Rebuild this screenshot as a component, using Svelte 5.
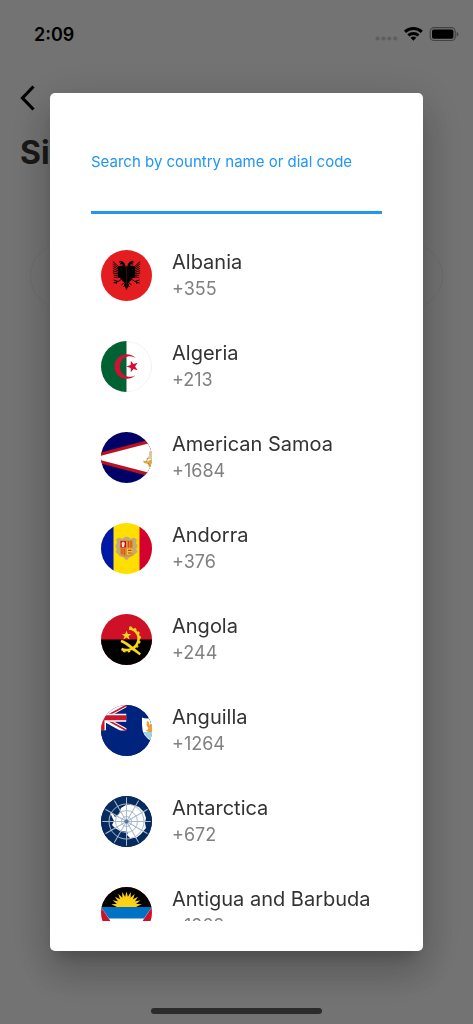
<script>
  let query = $state('');

  const countries = [
    { name: 'Albania', dial: '+355', flag: albania },
    { name: 'Algeria', dial: '+213', flag: algeria },
    { name: 'American Samoa', dial: '+1684', flag: samoa },
    { name: 'Andorra', dial: '+376', flag: andorra },
    { name: 'Angola', dial: '+244', flag: angola },
    { name: 'Anguilla', dial: '+1264', flag: anguilla },
    { name: 'Antarctica', dial: '+672', flag: antarctica },
    { name: 'Antigua and Barbuda', dial: '+1268', flag: antigua }
  ];

  const shown = $derived(
    countries.filter((c) => (c.name + c.dial).toLowerCase().includes(query.toLowerCase()))
  );

  const meridians = [0, 30, 60, 90, 120, 150];
  const rays = [-80, -64, -48, -32, -16, 0, 16, 32, 48, 64, 80];
  const feathers = [0, 1, 2, 3, 4, 5, 6, 7];
</script>

{#snippet albania()}
  <rect width="51" height="51" fill="#e41e20" />
  {#snippet wing()}
    <path d="M25.500 16 L24 18 L22 15.500 L17 16 L17 27.500 L20 28.500 L21.500 31 L24 32.500 L23 35 L25.500 40Z" />
    <path d="M25 19 C25 14 22.500 11 19.500 10.700 L17.500 12.200 L20 12.500 L18.500 14.500 L21.500 14.200 L22 18Z" />
    {#each feathers as i}
      <path d="M18 {17 + i * 1.4} L{11.8 + (i > 5 ? 1 : 0)} {11.5 + i * 2.3}" fill="none" stroke="#000" stroke-width="0.900" />
    {/each}
    <path d="M21 29 L17 31.500 L12.500 30 M17 31.500 L12.500 33 M16 31 L15 34 M24 32 L20.500 35 M24.500 34 L22.500 37" fill="none" stroke="#000" stroke-width="1" />
  {/snippet}
  <g>{@render wing()}</g>
  <g transform="matrix(-1 0 0 1 51 0)">{@render wing()}</g>
{/snippet}

{#snippet algeria()}
  <rect width="51" height="51" fill="#fff" />
  <rect width="25.500" height="51" fill="#006233" />
  <path d="M34.500 16.800 A12.300 12.300 0 1 0 34.500 34.200 A10.300 10.300 0 1 1 34.500 16.800Z" fill="#d21034" />
  <path d="M25.300 25.500 L29.700 24 L29.800 19.800 L32.400 23.100 L36.600 21.800 L34.100 25.500 L36.600 29.200 L32.400 27.900 L29.800 31.200 L29.700 27Z" fill="#d21034" />
  <path d="M25.500 0.300 A25.200 25.200 0 0 1 25.500 50.700" fill="none" stroke="#dfe3ec" stroke-width="0.600" />
{/snippet}

{#snippet samoa()}
  <rect width="51" height="51" fill="#000066" />
  <path d="M-1 20.800 L51 7 V45 L-1 31.200Z" fill="#bd1021" />
  <path d="M-1 24 L51 10.500 V41.500 L-1 28Z" fill="#fff" />
  <path d="M48 20 L51 18 V27 L45 27 L48 24Z" fill="#d9c9a0" />
  <path d="M42 28.500 L46 29.500 L51 27 V37 L48 35 L47 32 L43 31Z" fill="#e0aa38" />
  <path d="M45 30 L47 26 M47 31 L49.500 34" stroke="#9b7a45" stroke-width="0.800" />
{/snippet}

{#snippet andorra()}
  <rect width="51" height="51" fill="#fedf00" />
  <rect width="12.500" height="51" fill="#0018a8" />
  <rect x="38.500" width="12.500" height="51" fill="#d50032" />
  <path d="M15 17 Q18 13 21 16 Q25.500 11 30 16 Q33 13 36 17 L35 20 Q38 23 35 26 Q38 29 34 31 Q32 34 29 34 L25.500 37.500 L22 34 Q18 34 17 31 Q13 29 16 26 Q13 23 16 20Z" fill="#c6aa76" />
  <path d="M19 17 H32 V30 Q32 34 25.500 34 Q19 34 19 30Z" fill="#c8974b" />
  <path d="M19.500 18 H25 V24.500 H19.500Z" fill="#d50032" />
  <path d="M22 18.500 L24 20 L23 24 H21 L20.500 20Z" fill="#ffe9b0" />
  <path d="M26 18 H31.500 V24.500 H26Z M19.500 25.500 H25 V32 Q19.500 32 19.500 29Z" fill="#e98521" />
  <path d="M27.500 18 V24.500 M30 18 V24.500 M21 25.500 V31 M23.300 25.500 V32" stroke="#c83c22" stroke-width="0.800" />
  <path d="M26 25.500 H31.500 V29 Q31 32 26 32Z" fill="#f5c12e" />
  <path d="M27 27.300 H30.500 M27 30 H30.500" stroke="#c83c22" stroke-width="1.200" />
{/snippet}

{#snippet angola()}
  <rect width="51" height="51" fill="#ce1126" />
  <rect y="25.500" width="51" height="26" fill="#000" />
  <path d="M28 14.500 C36.500 15.500 39.500 23 36.500 29 C33.500 35.500 26 37.500 20.500 35" fill="none" stroke="#f9d616" stroke-width="2.600" />
  <path d="M28.500 13.300 C38 14.500 40.800 23 37.700 30 C34.500 37 25.500 39 20 36.300" fill="none" stroke="#f9d616" stroke-width="2" stroke-dasharray="2.400 2.400" />
  <path d="M20.500 25.800 C26 27.500 32 33 40 39.500 L38.500 41.300 C31 36 26 31 19.500 28Z" fill="#f9d616" />
  <path d="M25.500 16.800 L26.800 20 L30.200 20 L27.600 22.200 L28.600 25.500 L25.500 23.600 L22.400 25.500 L23.400 22.200 L20.800 20 L24.200 20Z" fill="#f9d616" />
{/snippet}

{#snippet anguilla()}
  <rect width="51" height="51" fill="#00247d" />
  <path d="M1 12.700 L26 -1 M1 12.700 L26 26.500" stroke="#fff" stroke-width="5" />
  <path d="M1 13.500 L26 0 M1 12 L26 25.800" stroke="#cf142b" stroke-width="1.600" />
  <path d="M-1 12.700 H25.500 M1 0 V25.500" stroke="#fff" stroke-width="8" />
  <path d="M-1 12.700 H25.500 M1 0 V25.500" stroke="#cf142b" stroke-width="5" />
  <rect x="25.500" width="26" height="28" fill="#00247d" />
  <rect y="25.500" width="51" height="26" fill="#00247d" />
  <path d="M41 12.500 Q46 14.500 51 12.500 V36 Q41 32 41 20Z" fill="#fff" />
  <path d="M42.500 27 H51 V35.500 Q45 33 42.500 27Z" fill="#9bd3ef" />
  <path d="M46 16 Q49 16.500 48 20 Q51 17.500 51 22 V27 Q48 28 44 25 Q47 26 47.500 23 Q44.500 21 46 16Z" fill="#f49b2d" />
{/snippet}

{#snippet antarctica()}
  <rect width="51" height="51" fill="#072b5f" />
  <path d="M9 16 L12 18 L14 21 L18 18 L20 12 L25 9 L32 9 L38 11 L43 16 L45 22 L44 27 L45 32 L40 38 L35 42 L29 42 L26 39 L27 36 L22 35 L19 35 L14 32 L11 29 L13 25 L11 21Z" fill="#fff" />
  <g fill="none" stroke="#a9b9cf" stroke-width="1">
    {#each meridians as angle}
      <path d="M0 25.500 H51" transform="rotate({angle} 25.500 25.500)" />
    {/each}
    <circle cx="25.500" cy="25.500" r="5" />
    <circle cx="25.500" cy="25.500" r="11" />
    <circle cx="25.500" cy="25.500" r="17.500" />
  </g>
  <circle cx="25.500" cy="25.500" r="2" fill="#5b7599" />
  <circle cx="25.500" cy="25.500" r="25" fill="none" stroke="#072b5f" stroke-width="1.500" />
{/snippet}

{#snippet antigua()}
  <rect width="51" height="51" fill="#ce1126" />
  <path d="M0 20 H51 L25.500 58Z" fill="#fff" />
  <path d="M0 20 H51 L43 31.500 H8Z" fill="#0072c6" />
  <rect width="51" height="20" fill="#000" />
  <g fill="#fcd116">
    <path d="M15.500 20 A10 8.500 0 0 1 35.500 20Z" />
    {#each rays as angle}
      <path d="M23.500 12 L25.500 4.500 L27.500 12Z" transform="rotate({angle} 25.500 20)" />
    {/each}
  </g>
  <rect x="3" y="20" width="45" height="4" fill="#0072c6" />
{/snippet}

<div class="page">
  <header class="status">
    <span>2:09</span>
    <svg width="84" height="18" viewBox="0 0 84 18" aria-hidden="true">
      <g fill="#ccc">
        <circle cx="2.500" cy="13.500" r="2.100" />
        <circle cx="8.500" cy="13.500" r="2.100" />
        <circle cx="14.300" cy="13.500" r="2.100" />
        <circle cx="20.200" cy="13.500" r="2.100" />
      </g>
      <g fill="none" stroke="#000" stroke-width="3">
        <path d="M30 6.800 A12.300 12.300 0 0 1 46.800 6.800" />
        <path d="M33.300 10.400 A7.500 7.500 0 0 1 43.500 10.400" />
      </g>
      <path d="M38.400 15.700 L35.500 12.800 A4.200 4.200 0 0 1 41.300 12.800Z" />
      <rect x="55.200" y="2.700" width="25" height="12.800" rx="3.800" fill="none" stroke="#909090" stroke-width="1.200" />
      <rect x="57" y="4.500" width="21.400" height="9.200" rx="1.800" />
      <path d="M81.700 7 Q83.400 7.500 83.400 9.200 Q83.400 10.900 81.700 11.400Z" fill="#909090" />
    </svg>
  </header>
  <button class="back" aria-label="Back">
    <svg width="16" height="26" viewBox="0 0 16 26"><path d="M13.500 1.500 L2.500 13 L13.500 24.500" fill="none" stroke="#000" stroke-width="3.200" /></svg>
  </button>
  <h1>Si</h1>
  <div class="field"></div>
  <div class="home"></div>
</div>

<div class="scrim">
  <div class="dialog" role="dialog" aria-modal="true">
    <label for="search">Search by country name or dial code</label>
    <input id="search" type="text" bind:value={query} />
    <ul>
      {#each shown as country}
        <li>
          <button class="row">
            <svg class="flag" viewBox="0 0 51 51" aria-hidden="true">{@render country.flag()}</svg>
            <span class="text">
              <span class="name">{country.name}</span>
              <span class="dial">{country.dial}</span>
            </span>
          </button>
        </li>
      {/each}
    </ul>
  </div>
</div>

<style>
  :global(body) {
    background: #fafafa;
  }
  .page,
  .scrim {
    box-sizing: border-box;
    font-family: Inter, 'Liberation Sans', sans-serif;
  }
  .page {
    display: flex;
    flex-direction: column;
    min-height: 100vh;
    padding: 22px 14px 10px 20px;
  }
  .status {
    display: flex;
    justify-content: space-between;
    align-items: center;
    height: 24px;
    padding-left: 14px;
    font-size: 18px;
    font-weight: 600;
  }
  button {
    padding: 0;
    border: 0;
    background: none;
    color: inherit;
    font: inherit;
    text-align: left;
  }
  .back {
    display: flex;
    align-self: flex-start;
    margin-top: 39px;
  }
  h1 {
    margin: 22px 0 0;
    color: #363636;
    font-size: 32px;
    line-height: 40px;
    font-weight: 700;
  }
  .field {
    height: 64px;
    margin: 70px 16px 0 10px;
    border: 1px solid #eee;
    border-radius: 33px;
  }
  .home {
    width: 39%;
    height: 6px;
    margin: auto auto 0;
    border-radius: 3px;
    background: #5e5e5e;
    transform: translateX(-3px);
  }
  .scrim {
    position: fixed;
    inset: 0;
    display: flex;
    padding: 93px 50px 73px;
    background: rgba(0, 0, 0, 0.54);
  }
  .dialog {
    box-sizing: border-box;
    display: flex;
    flex-direction: column;
    flex: 1;
    min-width: 0;
    padding: 59px 41px 30px;
    border-radius: 5px;
    background: #fff;
    box-shadow:
      0 11px 15px -7px rgba(0, 0, 0, 0.2),
      0 24px 38px 3px rgba(0, 0, 0, 0.14),
      0 9px 46px 8px rgba(0, 0, 0, 0.12);
  }
  label {
    color: #2196f3;
    font-size: 15px;
    line-height: 20px;
  }
  input {
    box-sizing: border-box;
    width: 100%;
    height: 42px;
    flex-shrink: 0;
    padding: 0;
    border: 0;
    border-bottom: 3px solid #2196f3;
    outline: 0;
    background: none;
    font: 20px Inter, 'Liberation Sans', sans-serif;
  }
  ul {
    flex: 1;
    min-height: 0;
    margin: 16px 0 0;
    padding: 0;
    overflow-y: auto;
    scrollbar-width: none;
    list-style: none;
  }
  .row {
    display: flex;
    align-items: center;
    gap: 20px;
    width: 100%;
    height: 91px;
    padding: 0 10px;
  }
  .flag {
    width: 51px;
    height: 51px;
    flex-shrink: 0;
    border-radius: 50%;
  }
  .text {
    display: flex;
    flex-direction: column;
    gap: 1px;
    line-height: 26px;
    white-space: nowrap;
  }
  .name {
    color: #333;
    font-size: 20px;
  }
  .dial {
    color: #808080;
    font-size: 18px;
  }
</style>
